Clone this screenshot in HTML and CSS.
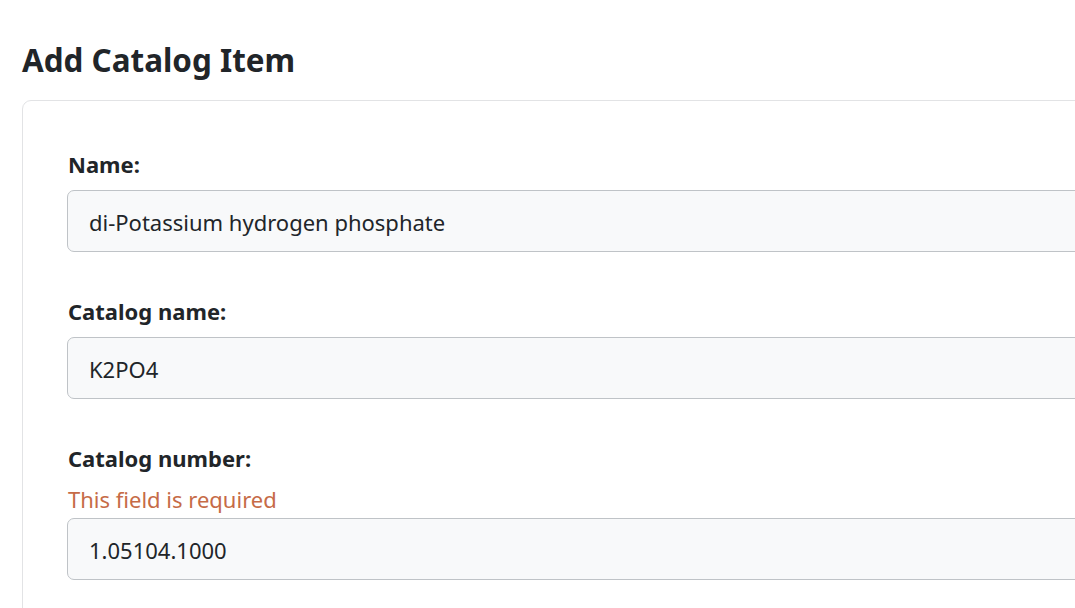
FILE: index.html
```html
<!DOCTYPE html>
<html lang="en">
<head>
<meta charset="utf-8">
<title>Add Catalog Item</title>
<link rel="stylesheet" href="styles.css">
</head>
<body>
<main class="page">
  <h1 class="title">Add Catalog Item</h1>
  <form class="card">
    <div class="field">
      <label class="label" for="name">Name:</label>
      <input class="input" id="name" type="text" value="di-Potassium hydrogen phosphate">
    </div>
    <div class="field">
      <label class="label" for="cname">Catalog name:</label>
      <input class="input" id="cname" type="text" value="K2PO4">
    </div>
    <div class="field">
      <label class="label" for="cnum">Catalog number:</label>
      <div class="error">This field is required</div>
      <input class="input" id="cnum" type="text" value="1.05104.1000">
    </div>
  </form>
</main>
</body>
</html>
```
FILE: styles.css
```css
html, body {
  margin: 0;
  padding: 0;
  background: #ffffff;
  overflow: hidden;
}
body {
  font-family: "Noto Sans", "Open Sans", sans-serif;
  color: #212529;
}
.page {
  width: 1300px;
  padding: 41px 0 0 22px;
}
.title {
  margin: 0 0 21px 0;
  font-size: 31.4px;
  line-height: 38px;
  font-weight: 700;
  color: #212529;
}
.card {
  border: 1px solid #e2e3e5;
  border-radius: 9px;
  padding: 47px 45px 40px 45px;
  display: flex;
  flex-direction: column;
  gap: 43px;
}
.field {
  display: flex;
  flex-direction: column;
}
.label {
  font-size: 22px;
  line-height: 32px;
  font-weight: 700;
  margin-bottom: 10px;
}
.error {
  font-size: 22px;
  line-height: 32px;
  color: #c66b47;
  margin-top: -1px;
  margin-bottom: 3px;
}
.input {
  box-sizing: border-box;
  height: 62px;
  margin-left: -1px;
  padding: 2px 21px 0 21px;
  font-family: inherit;
  font-size: 22px;
  color: #212529;
  background: #f8f9fa;
  border: 1px solid #bfc3c7;
  border-radius: 7px;
  outline: none;
}
```
